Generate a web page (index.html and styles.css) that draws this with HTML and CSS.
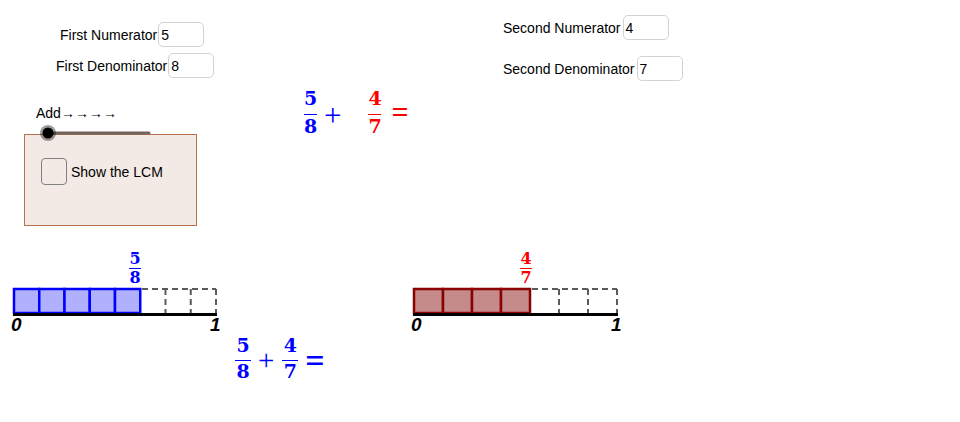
FILE: index.html
```html
<!DOCTYPE html>
<html>
<head>
<meta charset="utf-8">
<link rel="stylesheet" href="styles.css">
</head>
<body>
<div class="applet">
  <div class="field f1"><span class="lbl">First Numerator</span><span class="box">5</span></div>
  <div class="field f2"><span class="lbl">First Denominator</span><span class="box">8</span></div>
  <div class="field f3"><span class="lbl">Second Numerator</span><span class="box">4</span></div>
  <div class="field f4"><span class="lbl">Second Denominator</span><span class="box">7</span></div>

  <div class="add-label">Add<span class="arrows">→→→→</span></div>

  <div class="panel">
    <div class="check-row"><span class="check"></span><span class="check-lbl">Show the LCM</span></div>
  </div>

  <svg class="slider" width="130" height="26" viewBox="0 0 130 26">
    <line x1="18" y1="13" x2="119" y2="13" stroke="#71645e" stroke-width="3" stroke-linecap="round"/>
    <circle cx="18" cy="13" r="8" fill="rgba(0,0,0,0.38)"/>
    <circle cx="18" cy="13" r="5.5" fill="#000"/>
  </svg>

  <div class="eq eq-top">
    <div class="frac big blue"><span class="n">5</span><span class="bar"></span><span class="d">8</span></div>
    <span class="op plus blue">+</span>
    <div class="frac big red gap-frac"><span class="n">4</span><span class="bar"></span><span class="d">7</span></div>
    <span class="op equal red">=</span>
  </div>

  <div class="frac small blue lab-left"><span class="n">5</span><span class="bar"></span><span class="d">8</span></div>
  <div class="frac small red lab-right"><span class="n">4</span><span class="bar"></span><span class="d">7</span></div>

  <svg class="nline nl-left" width="240" height="60" viewBox="0 0 240 60">
    <g fill="#b0b0ff" stroke="#0000ff" stroke-width="2.5">
      <rect x="14" y="9" width="25.25" height="24"/>
      <rect x="39.25" y="9" width="25.25" height="24"/>
      <rect x="64.5" y="9" width="25.25" height="24"/>
      <rect x="89.75" y="9" width="25.25" height="24"/>
      <rect x="115" y="9" width="25.25" height="24"/>
    </g>
    <g fill="none" stroke="#5a5a5a" stroke-width="2" stroke-dasharray="6 4">
      <line x1="142" y1="9" x2="216" y2="9"/>
      <line x1="165.5" y1="9" x2="165.5" y2="33"/>
      <line x1="190.75" y1="9" x2="190.75" y2="33"/>
      <line x1="216" y1="9" x2="216" y2="33"/>
    </g>
    <line x1="13" y1="34.5" x2="217" y2="34.5" stroke="#000" stroke-width="3"/>
    <text x="11" y="51" class="tick">0</text>
    <text x="210" y="51" class="tick">1</text>
  </svg>

  <svg class="nline nl-right" width="240" height="60" viewBox="0 0 240 60">
    <g fill="#c58b8b" stroke="#8b0000" stroke-width="2.5">
      <rect x="14" y="9" width="29" height="24"/>
      <rect x="43" y="9" width="29" height="24"/>
      <rect x="72" y="9" width="29" height="24"/>
      <rect x="101" y="9" width="29" height="24"/>
    </g>
    <g fill="none" stroke="#5a5a5a" stroke-width="2" stroke-dasharray="6 4">
      <line x1="132" y1="9" x2="217" y2="9"/>
      <line x1="159" y1="9" x2="159" y2="33"/>
      <line x1="188" y1="9" x2="188" y2="33"/>
      <line x1="217" y1="9" x2="217" y2="33"/>
    </g>
    <line x1="13" y1="34.5" x2="218" y2="34.5" stroke="#000" stroke-width="3"/>
    <text x="11" y="51" class="tick">0</text>
    <text x="211" y="51" class="tick">1</text>
  </svg>

  <div class="eq eq-bottom">
    <div class="frac big2 blue"><span class="n">5</span><span class="bar"></span><span class="d">8</span></div>
    <span class="op plus2 blue">+</span>
    <div class="frac big2 blue gap-frac2"><span class="n">4</span><span class="bar"></span><span class="d">7</span></div>
    <span class="op equal2 blue">=</span>
  </div>
</div>
</body>
</html>
```
FILE: styles.css
```css
html, body {
  margin: 0;
  padding: 0;
  background: #fff;
}
.applet {
  position: relative;
  width: 960px;
  height: 422px;
  overflow: hidden;
  font-family: "Liberation Sans", Arial, sans-serif;
  font-size: 14px;
  color: #000;
}

/* input fields */
.field {
  position: absolute;
  display: flex;
  align-items: center;
  gap: 1px;
}
.field .box {
  box-sizing: border-box;
  width: 46px;
  height: 25px;
  border: 1px solid #d3d3d3;
  border-radius: 5px;
  padding-left: 2px;
  display: flex;
  align-items: center;
  background: #fff;
}
.f1 { left: 60px; top: 22px; }
.f2 { left: 56px; top: 53px; }
.f3 { left: 503px; top: 15px; }
.f3 .box { margin-left: 1px; }
.f4 { left: 503px; top: 56px; }
.f4 .box { margin-left: 1px; }

.add-label {
  position: absolute;
  left: 36px;
  top: 105px;
  line-height: 16px;
  white-space: nowrap;
}
.arrows {
  letter-spacing: 0;
}

.panel {
  position: absolute;
  left: 24px;
  top: 134px;
  width: 173px;
  height: 92px;
  box-sizing: border-box;
  border: 1px solid #b8704e;
  background: #f4eae5;
  padding: 23px 0 0 16px;
}
.check-row {
  display: flex;
  align-items: center;
  gap: 4px;
}
.check {
  box-sizing: border-box;
  width: 26px;
  height: 27px;
  border: 1px solid #808080;
  border-radius: 4px;
}

.slider {
  position: absolute;
  left: 30px;
  top: 120px;
}

/* fractions */
.frac {
  display: inline-flex;
  flex-direction: column;
  align-items: center;
  font-family: "DejaVu Serif", "Liberation Serif", serif;
  font-weight: bold;
}
.frac .n, .frac .d {
  line-height: 1;
}
.frac .bar {
  align-self: stretch;
  height: 1px;
  background: currentColor;
}
.blue { color: #0000ff; }
.red { color: #ff0000; }

.big { font-size: 19px; width: 13px; }
.big .bar { margin-top: 6px; }
.big .d { margin-top: 2px; }

.big2 { font-size: 19px; width: 16px; }
.big2 .bar { margin-top: 5px; }
.big2 .d { margin-top: 1px; }

.small { font-size: 16px; width: 12px; position: absolute; top: 251px; }
.small .bar { margin-top: 1px; }
.small .d { margin-top: 1px; }
.lab-left { left: 129px; }
.lab-right { left: 520px; }

.eq {
  position: absolute;
  display: flex;
  align-items: flex-start;
}
.eq-top { left: 304px; top: 89px; }
.eq-bottom { left: 235px; top: 336px; }

.op {
  font-family: "Liberation Serif", "Times New Roman", serif;
  line-height: 1;
}
.plus { font-size: 31px; margin-left: 7px; margin-top: 11px; }
.gap-frac { margin-left: 27px; }
.equal { font-size: 30px; font-weight: bold; margin-left: 10px; margin-top: 8px; }

.plus2 { font-size: 29px; margin-left: 7px; margin-top: 10px; }
.gap-frac2 { margin-left: 8px; }
.equal2 { font-size: 34px; font-weight: bold; margin-left: 7px; margin-top: 8px; }

.nline {
  position: absolute;
  top: 280px;
}
.nl-left { left: 0; }
.nl-right { left: 400px; }
.tick {
  font-family: "Liberation Sans", Arial, sans-serif;
  font-weight: bold;
  font-style: italic;
  font-size: 19px;
  fill: #000;
}
```
